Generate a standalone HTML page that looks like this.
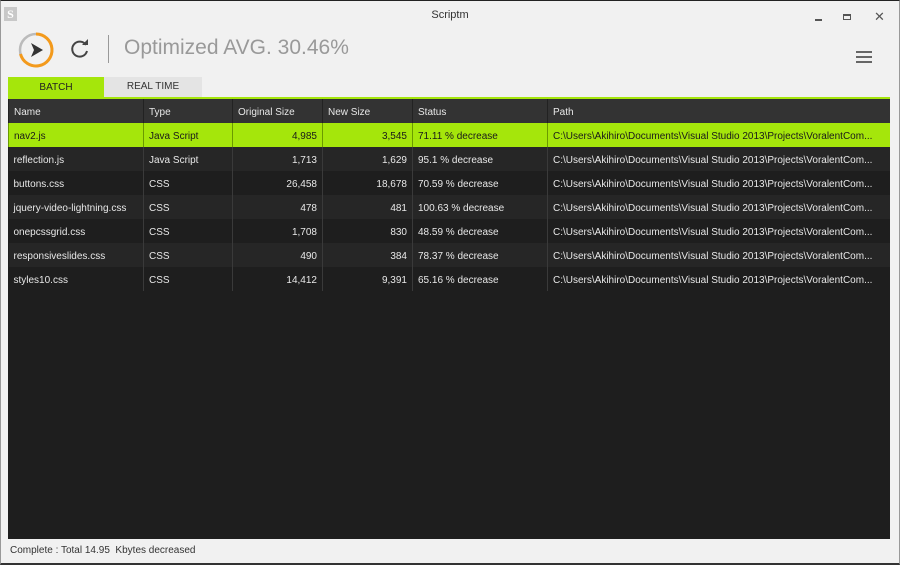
<!DOCTYPE html><html><head><style>
body{margin:0;width:900px;height:565px;background:#f1f1f1;font-family:"Liberation Sans",sans-serif;position:relative;overflow:hidden}
.frame{position:absolute;inset:0;border-top:1px solid #222;border-bottom:2px solid #333;border-left:1px solid #999;border-right:1px solid #999}
.abs{position:absolute}
table{border-collapse:collapse;font-size:10px;color:#e8e8e8;table-layout:fixed}
td{height:22px;padding:2px 5px 0;border-left:1px solid #3a3a3a;white-space:nowrap;overflow:hidden;box-sizing:content-box}
td:first-child{border-left:none}
.r{text-align:right}
tr.h td{background:#333;border-left:1px solid #222}
tr.sel td{background:#a5e60b;color:#1a1a1a;border-left:1px solid #6a9a00}
tr.a td{background:#262626}
tr.b td{background:#1e1e1e}
</style></head><body>
<div class="frame"></div>
<div class="abs" style="left:4px;top:7px;width:13px;height:14px;background:#c8c8c8;color:#fff;font:bold 12px 'Liberation Serif';text-align:center;line-height:14px">S</div>
<div class="abs" style="left:0;width:900px;top:9px;text-align:center;font-size:11px;color:#333">Scriptm</div>
<div class="abs" style="left:815px;top:19px;width:7px;height:1.5px;background:#555"></div>
<div class="abs" style="left:843px;top:14px;width:8px;height:6px;border:1px solid #555;border-top-width:2px;box-sizing:border-box"></div>
<div class="abs" style="left:874px;top:9px;font-size:13px;color:#555">✕</div>
<svg class="abs" style="left:17px;top:31px" width="38" height="38" viewBox="0 0 38 38"><circle cx="19" cy="19" r="16" fill="none" stroke="#bbb" stroke-width="2.5"/><path d="M19 3 A16 16 0 1 1 3.5 23" fill="none" stroke="#f39a1c" stroke-width="3"/><path d="M14 12 L26 19 L14 26 L17 19 Z" fill="#333"/></svg>
<svg class="abs" style="left:69px;top:38px" width="22" height="22" viewBox="0 0 22 22"><path d="M17 7 A7.5 7.5 0 1 0 18 13" fill="none" stroke="#444" stroke-width="2"/><path d="M13 7 L19 7 L19 1 Z" fill="#444"/></svg>
<div class="abs" style="left:108px;top:35px;width:1px;height:28px;background:#999"></div>
<div class="abs" style="left:124px;top:36px;font-size:21px;color:#999">Optimized AVG. 30.46%</div>
<div class="abs" style="left:856px;top:51px;width:16px;height:1.5px;background:#666;box-shadow:0 5px 0 #666,0 10px 0 #666"></div>
<div class="abs" style="left:8px;top:77px;width:96px;height:21px;background:#a5e60b;font-size:10px;color:#222;text-align:center;line-height:21px">BATCH</div>
<div class="abs" style="left:104px;top:77px;width:98px;height:20px;background:#e4e4e4;font-size:10px;color:#333;text-align:center;line-height:20px">REAL TIME</div>
<div class="abs" style="left:8px;top:97px;width:882px;height:2px;background:#a5e60b"></div>
<div class="abs" style="left:8px;top:99px;width:882px;height:440px;background:#1e1e1e">
<table style="width:882px">
<colgroup><col style="width:135px"><col style="width:89px"><col style="width:90px"><col style="width:90px"><col style="width:135px"><col></colgroup>
<tr class="h"><td>Name</td><td>Type</td><td>Original Size</td><td>New Size</td><td>Status</td><td>Path</td></tr>
<tr class="sel"><td>nav2.js</td><td>Java Script</td><td class="r">4,985</td><td class="r">3,545</td><td>71.11 % decrease</td><td>C:\Users\Akihiro\Documents\Visual Studio 2013\Projects\VoralentCom...</td></tr>
<tr class="a"><td>reflection.js</td><td>Java Script</td><td class="r">1,713</td><td class="r">1,629</td><td>95.1 % decrease</td><td>C:\Users\Akihiro\Documents\Visual Studio 2013\Projects\VoralentCom...</td></tr>
<tr class="b"><td>buttons.css</td><td>CSS</td><td class="r">26,458</td><td class="r">18,678</td><td>70.59 % decrease</td><td>C:\Users\Akihiro\Documents\Visual Studio 2013\Projects\VoralentCom...</td></tr>
<tr class="a"><td>jquery-video-lightning.css</td><td>CSS</td><td class="r">478</td><td class="r">481</td><td>100.63 % decrease</td><td>C:\Users\Akihiro\Documents\Visual Studio 2013\Projects\VoralentCom...</td></tr>
<tr class="b"><td>onepcssgrid.css</td><td>CSS</td><td class="r">1,708</td><td class="r">830</td><td>48.59 % decrease</td><td>C:\Users\Akihiro\Documents\Visual Studio 2013\Projects\VoralentCom...</td></tr>
<tr class="a"><td>responsiveslides.css</td><td>CSS</td><td class="r">490</td><td class="r">384</td><td>78.37 % decrease</td><td>C:\Users\Akihiro\Documents\Visual Studio 2013\Projects\VoralentCom...</td></tr>
<tr class="b"><td>styles10.css</td><td>CSS</td><td class="r">14,412</td><td class="r">9,391</td><td>65.16 % decrease</td><td>C:\Users\Akihiro\Documents\Visual Studio 2013\Projects\VoralentCom...</td></tr>
</table></div>
<div class="abs" style="left:10px;top:545px;font-size:10px;color:#333">Complete : Total 14.95 &nbsp;Kbytes decreased</div>
</body></html>
